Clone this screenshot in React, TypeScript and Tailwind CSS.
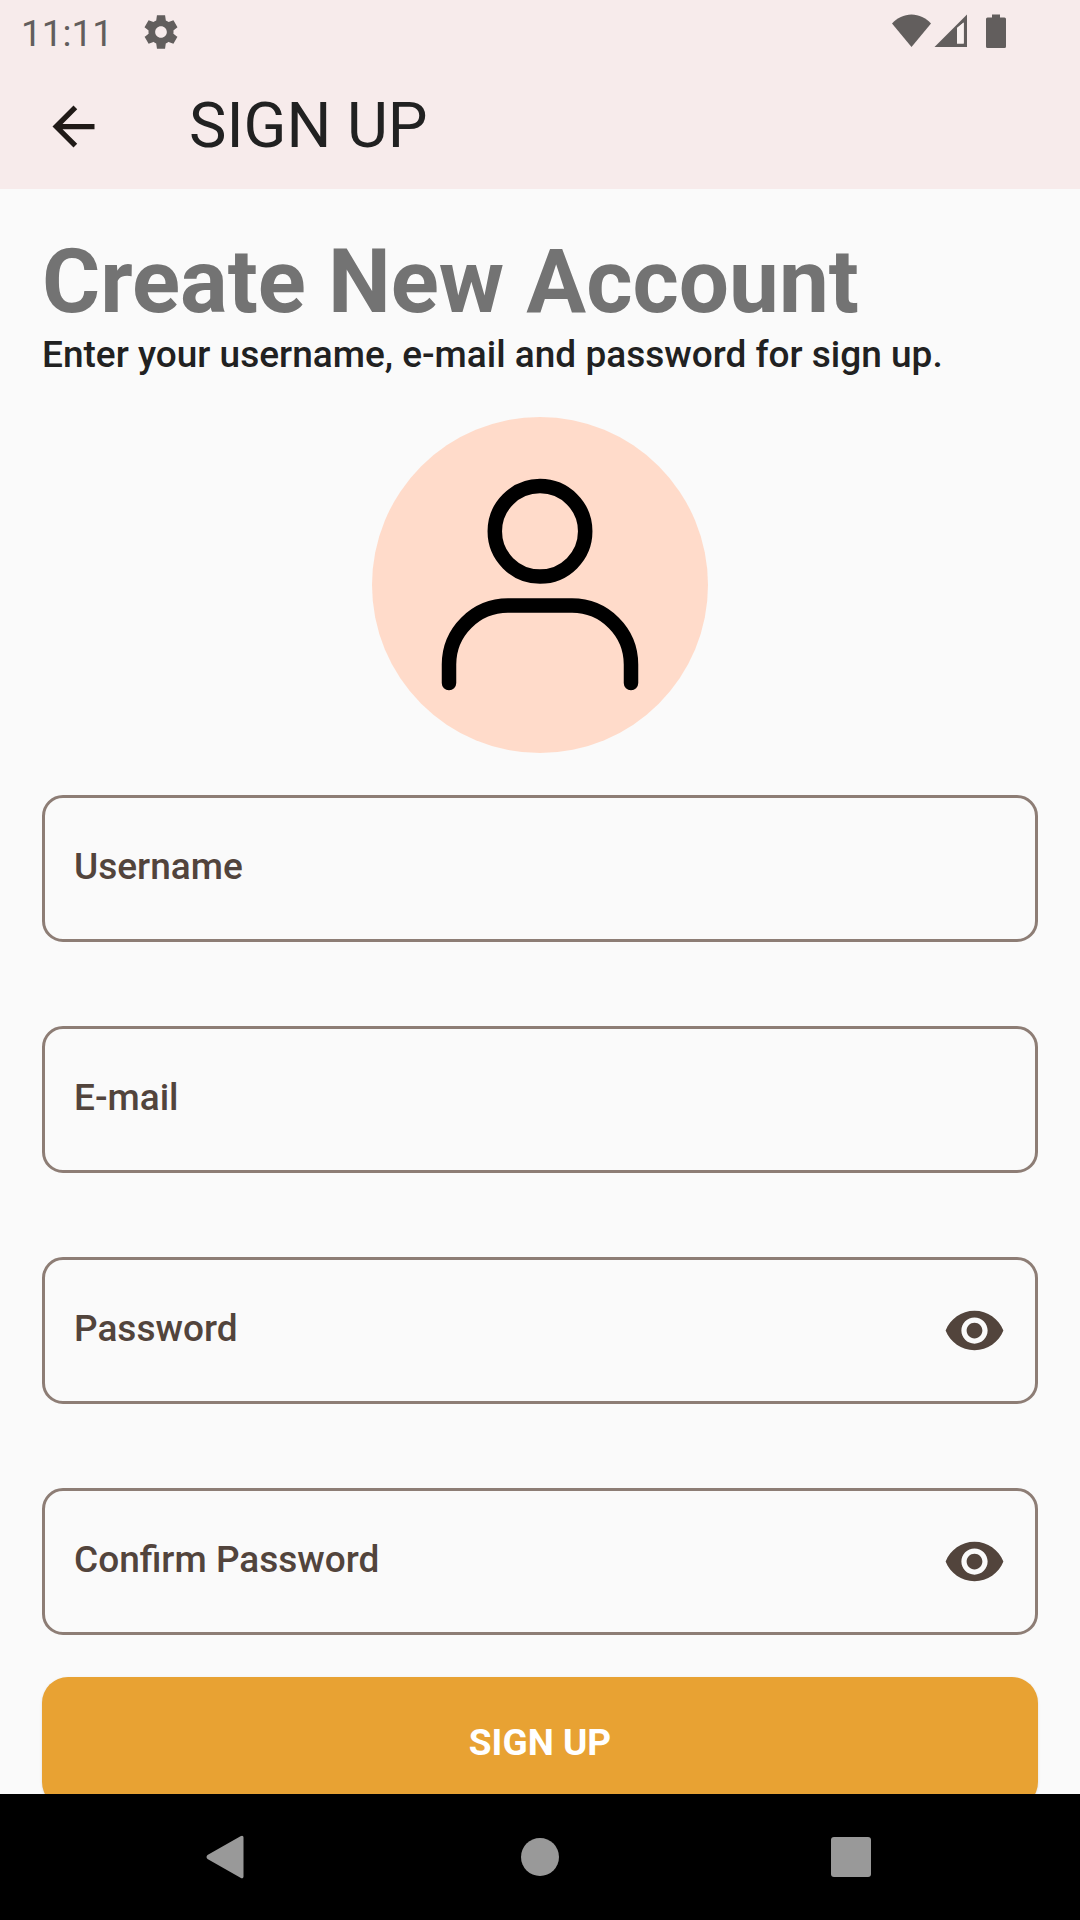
import { useState } from "react";

function StatusBar() {
  return (
    <div className="flex h-[63px] shrink-0 items-center justify-between pr-[74px] pl-[21px] text-[#625e5d]">
      <div className="flex items-center gap-7">
        <span className="pt-1 text-[37px] leading-[44px]">11:11</span>
        <svg className="size-10" viewBox="0 0 24 24" fill="currentColor" aria-hidden="true">
          <path d="M19.44 12.99l-.01.02c.04-.33.08-.67.08-1.01 0-.34-.03-.66-.07-.99l.01.02 2.44-1.92-2.43-4.22-2.87 1.16.01.01c-.52-.4-1.09-.74-1.71-1h.01L14.44 2H9.57l-.44 3.07h.01c-.62.26-1.19.6-1.71 1l.01-.01-2.88-1.17-2.44 4.22 2.44 1.92.01-.02c-.04.33-.07.65-.07.99 0 .34.03.68.08 1.01l-.01-.02-2.1 1.65-.33.26 2.43 4.2 2.88-1.15-.02-.04c.53.41 1.1.75 1.73 1.01h-.03L9.58 22h4.85s.03-.18.06-.42l.38-2.65h-.01c.62-.26 1.2-.6 1.73-1.01l-.02.04 2.88 1.15 2.43-4.2s-.14-.12-.33-.26l-2.11-1.66zM12 15.5c-1.93 0-3.5-1.57-3.5-3.5s1.57-3.5 3.5-3.5 3.5 1.57 3.5 3.5-1.57 3.5-3.5 3.5z" />
        </svg>
      </div>
      <svg className="h-[36px] w-[116px]" viewBox="0 0 116 36" fill="currentColor" aria-hidden="true">
        <path d="M21.5 33L2 9.5C7 4 14 .5 21.500 .5S36 4 41 9.500z" />
        <path fillRule="evenodd" d="M44.500 33H77V.500zM67 14V29.500H73.700V8.500z" />
        <path fill="#f9f1f0" d="M67 14V29.500H73.700V8.500z" />
        <path d="M102 .500h8v3h4.500q1.500 0 1.500 1.500v27.500q0 1.500-1.500 1.500h-17q-1.500 0-1.500-1.500v-27.500q0-1.500 1.500-1.500h4.500z" />
      </svg>
    </div>
  );
}

function AppBar() {
  return (
    <div className="flex h-[126px] shrink-0 items-center gap-[84px] px-[42px]">
      <button type="button" aria-label="Back" className="text-[#201a17]">
        <svg className="size-[63px]" viewBox="0 0 24 24" fill="currentColor" aria-hidden="true">
          <path d="M20 11H7.830l5.590-5.590L12 4l-8 8 8 8 1.410-1.410L7.830 13H20v-2z" />
        </svg>
      </button>
      <h1 className="text-[63px] leading-[74px] text-[#212121]">SIGN UP</h1>
    </div>
  );
}

type FieldProps = { id: string; label: string; type: string };

function Field({ id, label, type }: FieldProps) {
  const [visible, setVisible] = useState(false);
  const secret = type === "password";
  return (
    <div className="flex h-[147px] items-center gap-4 rounded-[21px] border-3 border-[#8d7d75] px-[29px] text-[#52443c]">
      <label htmlFor={id} className="shrink-0 pb-1 text-[37px] leading-[44px] font-medium">
        {label}
      </label>
      <input
        id={id}
        type={secret && visible ? "text" : type}
        className="min-w-0 flex-1 bg-transparent text-[37px] outline-none"
      />
      {secret && (
        <button type="button" aria-label="Show password" onClick={() => setVisible(!visible)}>
          <svg className="size-[63px]" viewBox="0 0 24 24" fill="currentColor" aria-hidden="true">
            <path d="M12 4.500C7 4.500 2.730 7.610 1 12c1.730 4.390 6 7.500 11 7.500s9.270-3.110 11-7.500c-1.730-4.390-6-7.500-11-7.500zM12 17c-2.760 0-5-2.240-5-5s2.240-5 5-5 5 2.240 5 5-2.240 5-5 5zm0-8c-1.660 0-3 1.340-3 3s1.340 3 3 3 3-1.340 3-3-1.340-3-3-3z" />
          </svg>
        </button>
      )}
    </div>
  );
}

function Avatar() {
  return (
    <div className="mx-auto mt-10 size-[336px] rounded-full bg-[#ffdbca]">
      <svg
        className="size-full"
        viewBox="0 0 336 336"
        fill="none"
        stroke="#000000"
        strokeWidth="14.500"
        strokeLinecap="round"
        aria-hidden="true"
      >
        <circle cx="168" cy="114.300" r="45.200" />
        <path d="M77 266V247.500a59 59 0 0 1 59-59H200a59 59 0 0 1 59 59V266" />
      </svg>
    </div>
  );
}

function NavigationBar() {
  return (
    <nav className="flex h-[126px] shrink-0 items-center bg-black px-[74px] text-[#999999]">
      <button type="button" aria-label="Back" className="flex flex-1 justify-center">
        <svg className="size-[54px]" viewBox="0 0 54 54" fill="currentColor" aria-hidden="true">
          <path d="M38.500 6.300C40 5 41.500 5.700 41.500 7.500V46.500C41.500 48.300 40 49 38.500 47.700L5.500 29C4.200 28 4.200 26 5.500 25z" />
        </svg>
      </button>
      <button type="button" aria-label="Home" className="flex flex-1 justify-center">
        <span className="size-[38px] rounded-full bg-[#999999]" />
      </button>
      <button type="button" aria-label="Recent apps" className="flex flex-1 justify-center">
        <span className="size-10 rounded-[3px] bg-[#999999]" />
      </button>
    </nav>
  );
}

const fields: FieldProps[] = [
  { id: "username", label: "Username", type: "text" },
  { id: "email", label: "E-mail", type: "email" },
  { id: "password", label: "Password", type: "password" },
  { id: "confirm-password", label: "Confirm Password", type: "password" },
];

export default function App() {
  return (
    <div className="flex h-screen flex-col bg-[#fafafa] font-['Roboto',sans-serif]">
      <header className="shrink-0 bg-[#f7ebeb]">
        <StatusBar />
        <AppBar />
      </header>
      <main className="min-h-0 flex-1 overflow-y-auto px-[42px] pt-[42px] [scrollbar-width:none]">
        <h2 className="text-[89px] leading-[102px] font-bold text-[#737373]">Create New Account</h2>
        <p className="text-[37px] leading-[44px] font-medium text-[#212121]">
          Enter your username, e-mail and password for sign up.
        </p>
        <Avatar />
        <form className="mt-[42px]" onSubmit={(event) => event.preventDefault()}>
          <div className="flex flex-col gap-[84px]">
            {fields.map((field) => (
              <Field key={field.id} {...field} />
            ))}
          </div>
          <button
            type="submit"
            className="mt-[42px] h-[131px] w-full rounded-[26px] bg-[#e8a233] text-[37px] leading-[44px] font-bold text-white shadow-sm"
          >
            SIGN UP
          </button>
        </form>
      </main>
      <NavigationBar />
    </div>
  );
}
